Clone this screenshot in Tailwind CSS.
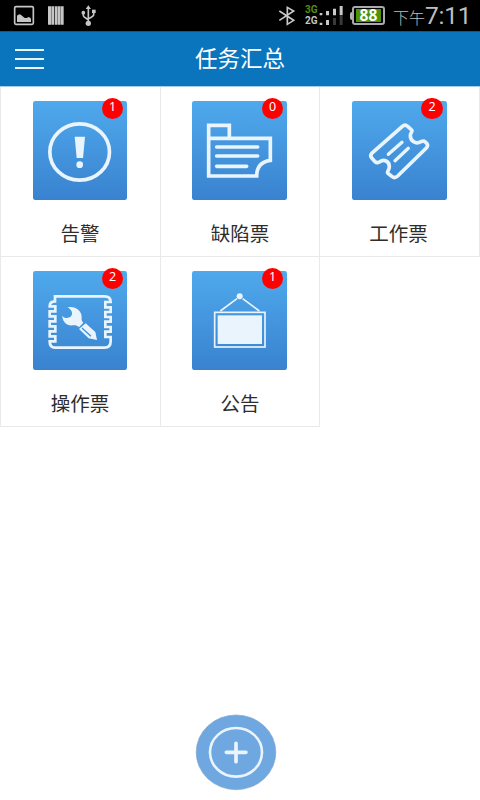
<!DOCTYPE html>
<html lang="zh-CN">
<head>
<meta charset="utf-8">
<title>任务汇总</title>
<script src="https://cdn.jsdelivr.net/npm/@tailwindcss/browser@4"></script>
</head>
<body class="bg-white">
<div class="relative flex h-[800px] w-[480px] flex-col overflow-hidden font-['Noto_Sans','Noto_Sans_CJK_SC',sans-serif]">
  <div class="flex h-[31px] shrink-0 items-center justify-between bg-black">
    <svg width="110" height="31" viewBox="0 0 330 93" fill="none" stroke="#c6c6c6">
      <rect x="44" y="20" width="56" height="53" rx="4" stroke-width="5"/>
      <path d="M51 66V47q8-9 15 0l7 6q8 3 12-2 8 1 8 6v9z" fill="#c6c6c6" stroke="none"/>
      <path d="M144 19h10v55h-10zM155 19h8v55h-8zM165 19h8v55h-8zM174 19h8v55h-8zM183 19h8v55h-8z" fill="#c6c6c6" stroke="none"/>
      <path d="M265 22v46M250 39v8q0 3 15 12M281 34v10q0 5-16 12" stroke-width="5"/>
      <path d="M265 16l8 11h-16z" fill="#c6c6c6" stroke="none"/>
      <circle cx="265" cy="70" r="8" fill="#c6c6c6" stroke="none"/>
      <circle cx="250" cy="38" r="5.500" fill="#c6c6c6" stroke="none"/>
      <rect x="276" y="29" width="11" height="10" fill="#c6c6c6" stroke="none"/>
    </svg>
    <div class="flex h-full items-center pr-[10px]">
      <svg width="19" height="31" viewBox="54 0 57 93" fill="none" stroke="#c9c9c9" stroke-width="5"><path d="M58 33L101 61 82 73V22l19 11L58 61"/></svg>
      <div class="ml-[8px] flex w-[14px] flex-col font-['Roboto'] text-[10px] leading-[12px] font-bold">
        <span class="text-[#4f8f0c]">3G</span><span class="-mt-[1px] text-[#c4c4c4]">2G</span>
      </div>
      <svg width="25" height="31" viewBox="178 0 75 93" fill="#c9c9c9">
        <path d="M180 39h8v7h-8zM199 33h9v13h-9zM220 26h9v20h-9zM240 18h9v28h-9zM180 68h8v7h-8zM199 60h9v15h-9z"/>
        <path d="M220 54h9v21h-9zM240 48h9v27h-9z" fill="#393939"/>
      </svg>
      <div class="ml-[6px] h-[8px] w-[2px] rounded-l bg-[#b5b5b5]"></div>
      <div class="flex h-[19px] w-[33px] items-center justify-center rounded-[3px] border-2 border-[#aaa] px-[2px] py-[1px]">
        <div class="flex h-full w-full items-center justify-center bg-[#4d920b] font-['Open_Sans'] text-[15.5px] leading-none font-bold text-white">88</div>
      </div>
      <div class="ml-[8px] flex h-[31px] items-baseline text-[#bebebe]">
        <span class="font-['Noto_Sans_CJK_SC'] text-[16px] leading-[31px] font-light">下午</span><span class="w-[45px] font-['Roboto'] text-[24.5px] leading-[31px] font-normal tracking-[-0.2px]">7:11</span>
      </div>
    </div>
  </div>

  <header class="grid h-[56px] shrink-0 grid-cols-[1fr_auto_1fr] items-center border-t border-b border-t-[#07598e] border-b-[#a8cce8] bg-[#0a75bc]">
    <div class="ml-[15px] mt-[-1px] flex w-[29px] flex-col gap-[7px]">
      <span class="h-[2px] bg-[#e9f3fa]"></span><span class="h-[2px] bg-[#e9f3fa]"></span><span class="h-[2px] bg-[#e9f3fa]"></span>
    </div>
    <h1 class="pt-[1px] text-[22.5px] leading-none text-white">任务汇总</h1>
  </header>

  <svg class="absolute" width="0" height="0"><defs><linearGradient id="tile" x1="0" y1="0" x2="0" y2="1"><stop offset="0" stop-color="#4fa9ec"/><stop offset="1" stop-color="#3982cf"/></linearGradient></defs></svg>

  <main class="grid grid-cols-[160px_159px_161px] grid-rows-[170px_170px] text-[19.5px] leading-[28px] text-[#2d2d2d]">
    <section class="flex flex-col items-center border-b border-l border-[#e9e9e9] pt-[14px]">
      <div class="relative mr-[2px]">
        <svg width="94" height="99" viewBox="100 51 282 297" fill="none" stroke="#eaf4fd">
          <rect x="100" y="51" width="282" height="297" rx="7" fill="url(#tile)" stroke="none"/>
          <ellipse cx="240" cy="204" rx="89.500" ry="84.500" stroke-width="11"/>
          <path d="M225 158h31l-6 64h-19z" fill="#eaf4fd" stroke="none"/><circle cx="240" cy="242" r="10" fill="#eaf4fd" stroke="none"/>
        </svg>
        <span class="absolute -top-[3px] right-[3.5px] h-[21px] w-[21px] rounded-full bg-[#fd0000] text-center text-[12.5px] leading-[17px] text-white">1</span>
      </div>
      <p class="mt-[20px] mr-[1px]">告警</p>
    </section>

    <section class="flex flex-col items-center border-b border-l border-[#e9e9e9] pt-[14px]">
      <div class="relative mr-[2px]">
        <svg width="95" height="99" viewBox="102 51 285 297" fill="none" stroke="#eaf4fd">
          <rect x="102" y="51" width="285" height="297" rx="7" fill="url(#tile)" stroke="none"/>
          <path d="M152 163V124h62v39M152 163H337v66q-41 6-41 47H152z" stroke-width="11"/>
          <path d="M176 189H299M176 216H299M176 247H266" stroke-width="11" stroke-linecap="round"/>
        </svg>
        <span class="absolute -top-[3px] right-[3.5px] h-[21px] w-[21px] rounded-full bg-[#fd0000] text-center text-[12.5px] leading-[17px] text-white">0</span>
      </div>
      <p class="mt-[20px]">缺陷票</p>
    </section>

    <section class="flex flex-col items-center border-r border-b border-l border-[#e9e9e9] pt-[14px]">
      <div class="relative">
        <svg width="95" height="99" viewBox="102 51 285 297" fill="none" stroke="#eaf4fd" stroke-linecap="round" stroke-linejoin="round">
          <rect x="102" y="51" width="285" height="297" rx="7" fill="url(#tile)" stroke="none"/>
          <path d="M161 208L253 127q8-7 16 0l12 11c4 4-4 8-4 17 0 16 16 27 32 18 6-3 9-3 13 1l5 5q4 6-2 13L239 276q-10 9-19 0l-10-8c-5-5 4-9 4-20 0-17-16-24-30-14-5 3-9 3-13-1l-9-10q-7-8-1-15z" stroke-width="11"/>
          <path d="M211 211L252 175M231 230L271 193" stroke-width="10"/>
        </svg>
        <span class="absolute -top-[3px] right-[4px] h-[21px] w-[22px] rounded-full bg-[#fd0000] text-center text-[12.5px] leading-[17px] text-white">2</span>
      </div>
      <p class="mt-[20px] mr-[2px]">工作票</p>
    </section>

    <section class="flex flex-col items-center border-b border-l border-[#e9e9e9] pt-[14px]">
      <div class="relative mr-[2px]">
        <svg width="94" height="99" viewBox="100 51 282 297" fill="none" stroke="#eaf4fd">
          <rect x="100" y="51" width="282" height="297" rx="7" fill="url(#tile)" stroke="none"/>
          <path d="M166 127H315q18 0 18 17h-16v16h16v14h-16v15h16v14h-16v16h16v14h-16v16h16v13q0 19-18 19H166q-16 0-16-19h17v-15h-17v-15h17v-15h-17v-15h17v-15h-17v-15h17v-15h-17q0-15 16-15z" stroke-width="8"/>
          <path d="M204 160c22-5 43 11 42 29-1 7 0 12 5 17l-13 14c-6-6-11-7-19-6-17 2-31-11-31-29 5 8 18 10 26 2 7-8 2-20-10-27z" fill="#eaf4fd" stroke="none"/>
          <path d="M258 208l29 26 5 24-25-5-29-28z" fill="#eaf4fd" stroke="none"/>
          <path d="M247 222l27 25" stroke="#4390d9" stroke-width="4"/>
        </svg>
        <span class="absolute -top-[3px] right-[3.5px] h-[21px] w-[21px] rounded-full bg-[#fd0000] text-center text-[12.5px] leading-[17px] text-white">2</span>
      </div>
      <p class="mt-[20px] mr-[1px]">操作票</p>
    </section>

    <section class="flex flex-col items-center border-b border-l border-[#e9e9e9] pt-[14px]">
      <div class="relative mr-[2px]">
        <svg width="95" height="99" viewBox="102 51 285 297" fill="none" stroke="#eaf4fd">
          <rect x="102" y="51" width="285" height="297" rx="7" fill="url(#tile)" stroke="none"/>
          <circle cx="245" cy="127" r="9" fill="#eaf4fd" stroke="none"/>
          <path d="M237 134L187 171M254 134L304 171" stroke-width="5"/>
          <rect x="170" y="175" width="151" height="104" stroke-width="5"/>
          <rect x="179" y="184" width="133" height="86" fill="#eaf4fd" stroke="none"/>
        </svg>
        <span class="absolute -top-[3px] right-[3.5px] h-[21px] w-[21px] rounded-full bg-[#fd0000] text-center text-[12.5px] leading-[17px] text-white">1</span>
      </div>
      <p class="mt-[20px]">公告</p>
    </section>
    <div class="border-l border-[#e9e9e9]"></div>
  </main>

  <button class="absolute top-[714px] left-[195px]" aria-label="添加">
    <svg width="82" height="77" viewBox="27 27 246 231" fill="none" stroke="#eaf4fd">
      <ellipse cx="150" cy="142" rx="119.500" ry="112" fill="#6fa8e0" stroke="#83a7c8" stroke-width="2"/>
      <ellipse cx="150" cy="142" rx="78" ry="73" stroke-width="8"/>
      <path d="M150 115v55M121 142h59" stroke-width="11" stroke-linecap="round"/>
    </svg>
  </button>
</div>
</body>
</html>
